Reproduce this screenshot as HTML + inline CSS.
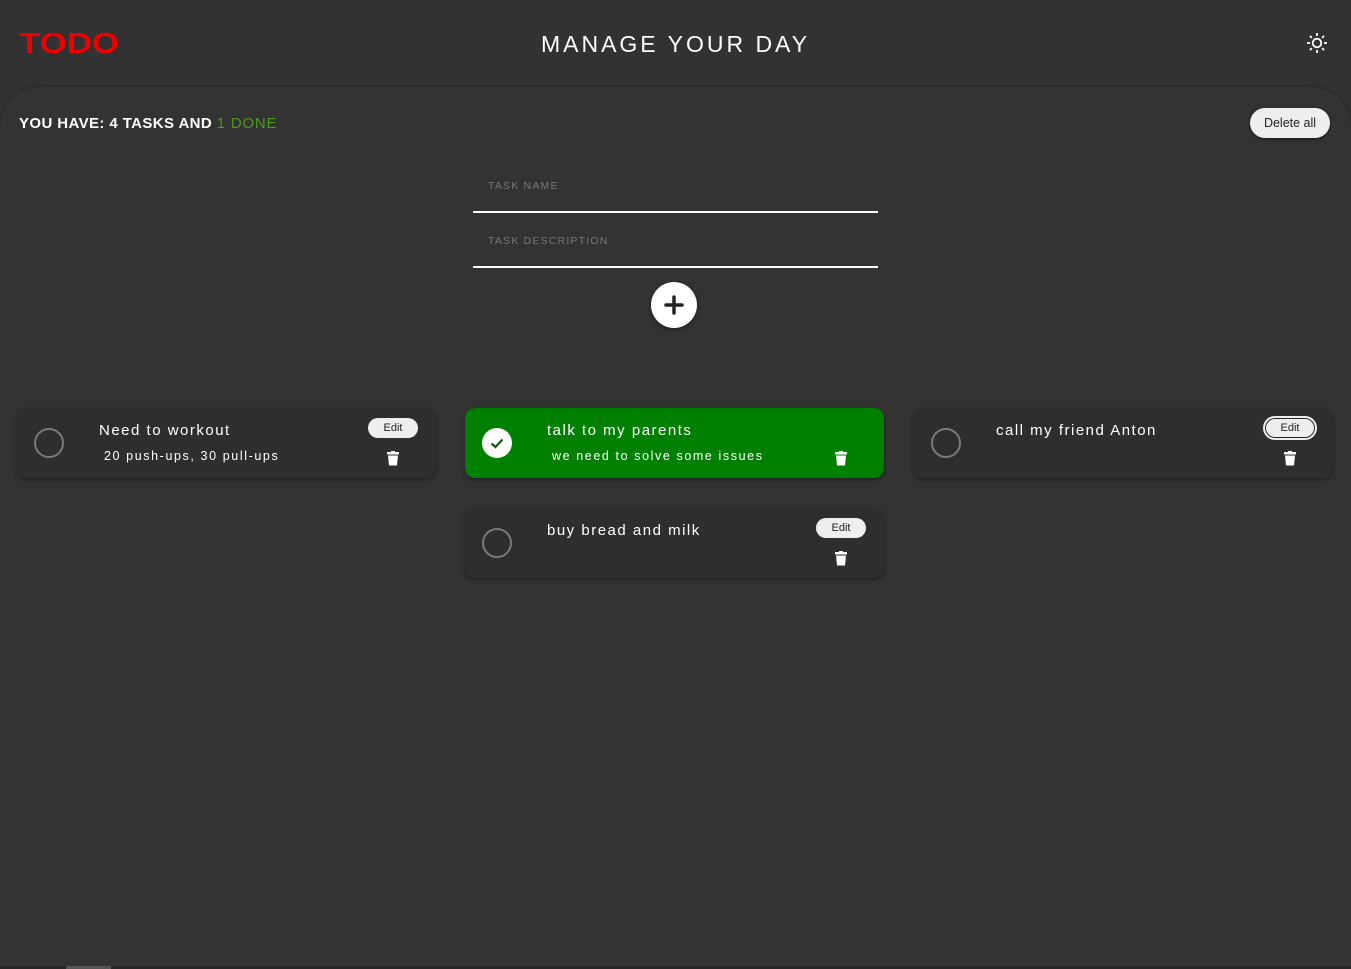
<!DOCTYPE html>
<html><head><meta charset="utf-8"><style>
*{margin:0;padding:0;box-sizing:border-box}
body{width:1351px;height:969px;background:#323232;font-family:"Liberation Sans",sans-serif;color:#fff;position:relative;overflow:hidden}
.logo{position:absolute;left:19px;top:29px;font-size:29px;font-weight:bold;color:#e00;letter-spacing:0px;transform:scaleX(1.2);transform-origin:left;line-height:30px}
.title{position:absolute;left:0;width:1351px;top:30px;text-align:center;font-size:23px;letter-spacing:3px;line-height:28px}
.panel{position:absolute;left:0;top:87px;width:1351px;height:882px;background:#333;border-radius:40px 40px 0 0;box-shadow:0 -1px 3px rgba(0,0,0,.25)}
.count{position:absolute;left:19px;top:115px;font-size:15px;font-weight:bold;line-height:18px;letter-spacing:.4px}
.count span{color:#4c9a1e;font-weight:normal;letter-spacing:.8px}
.del{position:absolute;left:1250px;top:108px;width:80px;height:30px;border-radius:15px;background:#eee;color:#222;font-size:12.5px;text-align:center;line-height:30px;box-shadow:0 1px 3px rgba(0,0,0,.5)}
.inp{position:absolute;left:473px;width:405px;border-bottom:2px solid #fff;color:#777;font-size:10.5px;letter-spacing:1.2px;padding-left:15px}
.plus{position:absolute;left:651px;top:282px;width:46px;height:46px;border-radius:50%;background:#fff;box-shadow:0 1px 4px rgba(0,0,0,.5)}
.card{position:absolute;width:419px;height:70px;background:#2e2e2e;border-radius:10px;box-shadow:0 2px 5px rgba(0,0,0,.4)}
.card.g{background:#008000}
.circ{position:absolute;left:17px;top:20px;width:30px;height:30px;border-radius:50%;border:2px solid #7a7a7a}
.chk{position:absolute;left:17px;top:20px;width:30px;height:30px;border-radius:50%;background:#fff}
.t{position:absolute;left:82px;top:14px;font-size:15px;letter-spacing:1.5px}
.d{position:absolute;left:87px;top:41px;font-size:12.5px;letter-spacing:1.6px}
.edit{position:absolute;left:351px;top:10px;width:50px;height:20px;border-radius:10px;background:#eee;color:#222;font-size:11px;text-align:center;line-height:20px}
.edit.o{outline:2px solid #eee;outline-offset:0;background:#eee;box-shadow:inset 0 0 0 1px #222}
.tr{position:absolute;left:370px;top:43px}
</style></head><body>
<div class="logo">TODO</div>
<div class="title">MANAGE YOUR DAY</div>
<svg style="position:absolute;left:1306px;top:32px" width="22" height="22" viewBox="0 0 22 22" fill="none" stroke="#fff" stroke-width="1.8"><circle cx="11" cy="11" r="4.3"/><path d="M11 1v3M11 18v3M1 11h3M18 11h3M3.9 3.9l2 2M16.1 16.1l2 2M3.9 18.1l2-2M16.1 5.9l2-2"/></svg>
<div class="panel"></div>
<div class="count">YOU HAVE: 4 TASKS AND <span>1 DONE</span></div>
<div class="del">Delete all</div>
<div class="inp" style="top:180px;height:33px">TASK NAME</div>
<div class="inp" style="top:235px;height:33px">TASK DESCRIPTION</div>
<div class="plus"><svg width="46" height="46"><path d="M23 15v16M15 23h16" stroke="#222" stroke-width="3.5" stroke-linecap="round"/></svg></div>

<div class="card" style="left:17px;top:408px"><div class="circ"></div><div class="t">Need to workout</div><div class="d">20 push-ups, 30 pull-ups</div><div class="edit">Edit</div>
<svg class="tr" width="12" height="15" viewBox="0 0 12 15"><rect x="0" y="1" width="12" height="2.5" rx=".5" fill="#fff"/><rect x="4" y="0" width="4" height="2" fill="#fff"/><path d="M1 4.5h10l-1 10H2z" fill="#fff"/></svg></div>

<div class="card g" style="left:465px;top:408px"><div class="chk"><svg width="30" height="30"><path d="M9.5 15.5l4 3.5 7-7.5" stroke="#0a5a0a" stroke-width="2.2" fill="none"/></svg></div><div class="t">talk to my parents</div><div class="d">we need to solve some issues</div>
<svg class="tr" width="12" height="15" viewBox="0 0 12 15"><rect x="0" y="1" width="12" height="2.5" rx=".5" fill="#fff"/><rect x="4" y="0" width="4" height="2" fill="#fff"/><path d="M1 4.5h10l-1 10H2z" fill="#fff"/></svg></div>

<div class="card" style="left:914px;top:408px"><div class="circ"></div><div class="t">call my friend Anton</div><div class="edit o">Edit</div>
<svg class="tr" width="12" height="15" viewBox="0 0 12 15"><rect x="0" y="1" width="12" height="2.5" rx=".5" fill="#fff"/><rect x="4" y="0" width="4" height="2" fill="#fff"/><path d="M1 4.5h10l-1 10H2z" fill="#fff"/></svg></div>

<div class="card" style="left:465px;top:508px"><div class="circ"></div><div class="t">buy bread and milk</div><div class="edit">Edit</div>
<svg class="tr" width="12" height="15" viewBox="0 0 12 15"><rect x="0" y="1" width="12" height="2.5" rx=".5" fill="#fff"/><rect x="4" y="0" width="4" height="2" fill="#fff"/><path d="M1 4.5h10l-1 10H2z" fill="#fff"/></svg></div>

<div style="position:absolute;left:0;top:966px;width:1351px;height:3px;background:#25282a"></div>
<div style="position:absolute;left:66px;top:966px;width:45px;height:3px;background:#555"></div>
</body></html>
